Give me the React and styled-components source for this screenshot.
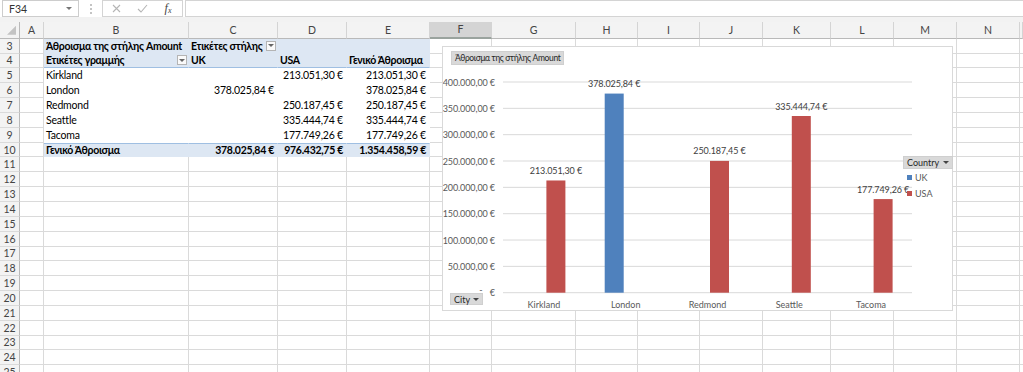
import React from 'react';
import styled, { createGlobalStyle } from 'styled-components';

const GlobalStyle = createGlobalStyle`
  html, body { margin: 0; padding: 0; background: #fff; }
  body { font-family: Lato, "Open Sans", "DejaVu Sans", sans-serif; color: #000; }
  #root { width: 1023px; height: 372px; overflow: hidden; }
`;

const COLS = [
  { key: 'A', w: 24 }, { key: 'B', w: 145 }, { key: 'C', w: 89 }, { key: 'D', w: 69 },
  { key: 'E', w: 83 }, { key: 'F', w: 62 }, { key: 'G', w: 84 }, { key: 'H', w: 62 },
  { key: 'I', w: 62 }, { key: 'J', w: 63 }, { key: 'K', w: 68 }, { key: 'L', w: 63 },
  { key: 'M', w: 63 }, { key: 'N', w: 63 },
];
const TEMPLATE = `20px ${COLS.map((c) => c.w + 'px').join(' ')} 1fr`;
const GRID = '#dadada';
const PIVOT_BLUE = '#dde7f3';
const PIVOT_LINE = '#9fbfe2';

const Page = styled.div`
  width: 1023px;
  height: 372px;
  display: flex;
  flex-direction: column;
  background: #fff;
  overflow: hidden;
  & > * { flex-shrink: 0; }
`;

/* ---------- formula bar ---------- */
const FormulaBar = styled.div`
  height: 17px;
  display: flex;
  align-items: stretch;
  background: #fff;
  padding-left: 2px;
  box-sizing: border-box;
`;
const NameBox = styled.div`
  width: 77px;
  box-sizing: border-box;
  border: 1px solid #cdcdcd;
  display: flex;
  align-items: center;
  justify-content: space-between;
  padding: 0 6px 0 6px;
  font-size: 10.5px;
  color: #333;
`;
const Caret = styled.span`
  width: 0;
  height: 0;
  border-left: 3px solid transparent;
  border-right: 3px solid transparent;
  border-top: 3px solid ${(p) => p.$color || '#777'};
`;
const Grip = styled.div`
  width: 23px;
  display: flex;
  flex-direction: column;
  align-items: center;
  justify-content: center;
  gap: 2px;
  & > span { width: 2px; height: 2px; background: #c4c4c4; }
`;
const IconBox = styled.div`
  width: 81px;
  box-sizing: border-box;
  border: 1px solid #d4d4d4;
  display: grid;
  grid-template-columns: 26px 26px 26px;
  align-items: center;
  justify-items: center;
`;
const Fx = styled.span`
  font-family: "Liberation Serif", serif;
  font-style: italic;
  font-size: 12px;
  color: #444;
  & > sub { font-size: 8px; vertical-align: -1px; }
`;
const FormulaInput = styled.div`
  flex: 1;
  margin-left: 2px;
  box-sizing: border-box;
  border: 1px solid #d4d4d4;
  border-right: none;
`;
const Band = styled.div`
  height: 5px;
  background: #f2f2f2;
`;

/* ---------- sheet ---------- */
const Sheet = styled.div`
  position: relative;
  height: 350px;
  overflow: hidden;
`;
const Row = styled.div`
  display: grid;
  grid-template-columns: ${TEMPLATE};
  height: ${(p) => p.$h}px;
`;
const ColHead = styled.div`
  box-sizing: border-box;
  display: flex;
  align-items: center;
  justify-content: center;
  font-size: 10.5px;
  color: #444;
  background: ${(p) => (p.$sel ? '#d4d4d4' : '#f3f3f3')};
  border-right: 1px solid #d4d4d4;
  border-bottom: ${(p) => (p.$sel ? '2px solid #9aa39e' : '1px solid #b9b9b9')};
`;
const Corner = styled.div`
  box-sizing: border-box;
  background: #f3f3f3;
  border-right: 1px solid #b9b9b9;
  border-bottom: 1px solid #b9b9b9;
  display: flex;
  align-items: flex-end;
  justify-content: flex-end;
  padding: 0 3px 3px 0;
  & > span {
    width: 9px;
    height: 9px;
    background: #c3c3c3;
    clip-path: polygon(100% 0, 100% 100%, 0 100%);
  }
`;
const RowHead = styled.div`
  box-sizing: border-box;
  display: flex;
  align-items: center;
  justify-content: center;
  font-size: 10.5px;
  color: #444;
  background: #f3f3f3;
  border-right: 1px solid #b9b9b9;
  border-bottom: 1px solid #dadada;
`;
const cellBg = { head: PIVOT_BLUE, total: PIVOT_BLUE, body: '#fff', plain: '#fff' };
const Cell = styled.div`
  box-sizing: border-box;
  display: flex;
  align-items: center;
  justify-content: ${(p) =>
    p.$filter ? 'space-between' : p.$align === 'right' ? 'flex-end' : 'flex-start'};
  padding: ${(p) =>
    p.$filter ? '0 1px 0 2px' : p.$align === 'right' ? '0 3px 0 2px' : '0 2px 0 2px'};
  font-size: 10.5px;
  font-weight: ${(p) => (p.$bold ? 700 : 400)};
  letter-spacing: ${(p) => (p.$bold ? '-0.3px' : '-0.2px')};
  white-space: nowrap;
  background: ${(p) => cellBg[p.$kind]};
  border-right: 1px solid ${(p) => (p.$kind === 'plain' ? GRID : 'transparent')};
  border-bottom: 1px solid
    ${(p) => (p.$kind === 'plain' ? GRID : p.$lineBelow ? PIVOT_LINE : 'transparent')};
  border-top: ${(p) => (p.$lineAbove ? `1px solid ${PIVOT_LINE}` : 'none')};
`;
const FilterBtn = styled.span`
  box-sizing: border-box;
  width: 10px;
  height: 10px;
  border: 1px solid #b4b4b4;
  background: #fafafa;
  display: flex;
  align-items: center;
  justify-content: center;
  flex-shrink: 0;
`;

/* ---------- chart ---------- */
const ChartBox = styled.div`
  position: absolute;
  left: 442px;
  top: 24px;
  width: 511px;
  height: 265px;
  box-sizing: border-box;
  border: 1px solid #d9d9d9;
  background: #fff;
`;
const FieldButton = styled.div`
  position: absolute;
  left: ${(p) => p.$x}px;
  top: ${(p) => p.$y}px;
  height: ${(p) => p.$h || 12}px;
  box-sizing: border-box;
  padding: 0 3px;
  display: flex;
  align-items: center;
  gap: 3px;
  background: #d9d9d9;
  border: 1px solid #cfcfcf;
  font-size: ${(p) => p.$fs || 9}px;
  color: #262626;
  white-space: nowrap;
  letter-spacing: ${(p) => p.$ls || 0}px;
`;
const Legend = styled.div`
  position: absolute;
  left: 460px;
  top: 109px;
  display: flex;
  flex-direction: column;
  align-items: flex-start;
`;
const LegendBtn = styled.div`
  height: 13px;
  box-sizing: border-box;
  padding: 0 3px;
  display: flex;
  align-items: center;
  gap: 4px;
  background: #d9d9d9;
  border: 1px solid #cfcfcf;
  font-size: 9px;
  color: #262626;
`;
const LegendItem = styled.div`
  height: 16px;
  display: flex;
  align-items: center;
  gap: 3px;
  padding-left: 4px;
  font-size: 9px;
  color: #595959;
`;
const Swatch = styled.span`
  width: 5px;
  height: 5px;
  background: ${(p) => p.$color};
`;
const PlotSvg = styled.svg`
  display: block;
  font-family: Lato, "Open Sans", sans-serif;
`;

const BLUE = '#4f81bd';
const RED = '#c0504d';

function fmt(v) {
  const [i, d] = v.toFixed(2).split('.');
  return i.replace(/\B(?=(\d{3})+(?!\d))/g, '.') + ',' + d + ' €';
}

const CITIES = [
  { name: 'Kirkland', uk: null, usa: 213051.3 },
  { name: 'London', uk: 378025.84, usa: null },
  { name: 'Redmond', uk: null, usa: 250187.45 },
  { name: 'Seattle', uk: null, usa: 335444.74 },
  { name: 'Tacoma', uk: null, usa: 177749.26 },
];

const Y0 = 245.7;
const yOf = (v) => Y0 - (v / 400000) * 210.7;
const X1 = 60;
const X2 = 469;
const CAT = (X2 - X1) / 5;

function Chart() {
  const ticks = [0, 50000, 100000, 150000, 200000, 250000, 300000, 350000, 400000];
  return (
    <ChartBox>
      <PlotSvg width="509" height="263" viewBox="0 0 509 263">
        {ticks.map((t) => (
          <g key={t}>
            <line x1={X1} x2={X2} y1={yOf(t)} y2={yOf(t)} stroke="#d9d9d9" strokeWidth="1" />
            {t === 0 ? (
              <>
                <text x="38" y={yOf(t) - 3} fontSize="9" fill="#595959" textAnchor="middle" dominantBaseline="central">-</text>
                <text x="52" y={yOf(t)} fontSize="9" fill="#595959" textAnchor="end" dominantBaseline="central">€</text>
              </>
            ) : (
              <text x="52" y={yOf(t)} fontSize="9" fill="#595959" textAnchor="end" dominantBaseline="central" letterSpacing="-0.1">
                {fmt(t)}
              </text>
            )}
          </g>
        ))}
        {CITIES.map((c, i) => {
          const cx = X1 + CAT * (i + 0.5);
          const bars = [];
          if (c.uk != null) bars.push({ v: c.uk, x: cx - 21, color: BLUE });
          if (c.usa != null) bars.push({ v: c.usa, x: cx + 2.5, color: RED });
          return (
            <g key={c.name}>
              {bars.map((b) => (
                <g key={b.color}>
                  <rect x={b.x} y={yOf(b.v)} width="19" height={Y0 - yOf(b.v)} fill={b.color} />
                  <text x={b.x + 9.5} y={yOf(b.v) - 10} fontSize="9" fill="#404040" textAnchor="middle" dominantBaseline="central" letterSpacing="-0.1">
                    {fmt(b.v)}
                  </text>
                </g>
              ))}
              <text x={cx} y="257" fontSize="9" fill="#595959" textAnchor="middle" dominantBaseline="central">
                {c.name}
              </text>
            </g>
          );
        })}
      </PlotSvg>
      <FieldButton $x={8} $y={4} $h={14} $fs={8.5} $ls={-0.35}>
        Άθροισμα της στήλης Amount
      </FieldButton>
      <FieldButton $x={7} $y={246}>
        City <Caret $color="#444" />
      </FieldButton>
      <Legend>
        <LegendBtn>
          Country <Caret $color="#444" />
        </LegendBtn>
        <LegendItem>
          <Swatch $color={BLUE} />
          UK
        </LegendItem>
        <LegendItem>
          <Swatch $color={RED} />
          USA
        </LegendItem>
      </Legend>
    </ChartBox>
  );
}

/* ---------- data ---------- */
const PIVOT = {
  3: {
    kind: 'head',
    cells: {
      B: { text: 'Άθροισμα της στήλης Amount', bold: true },
      C: { text: 'Ετικέτες στήλης', bold: true, filter: true },
      D: {},
      E: {},
    },
  },
  4: {
    kind: 'head',
    lineBelow: true,
    cells: {
      B: { text: 'Ετικέτες γραμμής', bold: true, filter: true },
      C: { text: 'UK', bold: true },
      D: { text: 'USA', bold: true },
      E: { text: 'Γενικό Άθροισμα', bold: true },
    },
  },
  10: {
    kind: 'total',
    cells: {
      B: { text: 'Γενικό Άθροισμα', bold: true },
      C: { text: fmt(378025.84), bold: true, align: 'right' },
      D: { text: fmt(976432.75), bold: true, align: 'right' },
      E: { text: fmt(1354458.59), bold: true, align: 'right' },
    },
  },
};
CITIES.forEach((c, i) => {
  PIVOT[5 + i] = {
    kind: 'body',
    cells: {
      B: { text: c.name },
      C: { text: c.uk != null ? fmt(c.uk) : '', align: 'right' },
      D: { text: c.usa != null ? fmt(c.usa) : '', align: 'right' },
      E: { text: fmt(c.uk != null ? c.uk : c.usa), align: 'right' },
    },
  };
});

const ROWS = Array.from({ length: 23 }, (_, i) => i + 3);

function FilterIcon() {
  return (
    <FilterBtn>
      <Caret $color="#666" />
    </FilterBtn>
  );
}

function SheetRow({ n }) {
  const p = PIVOT[n];
  return (
    <Row $h={14.85}>
      <RowHead>{n}</RowHead>
      {COLS.map((col) => {
        const pc = p && p.cells[col.key];
        if (pc) {
          return (
            <Cell
              key={col.key}
              $kind={p.kind}
              $bold={pc.bold}
              $align={pc.align}
              $filter={pc.filter}
              $lineBelow={p.lineBelow}
              $lineAbove={p.kind === 'total'}
            >
              {pc.text && <span>{pc.text}</span>}
              {pc.filter && <FilterIcon />}
            </Cell>
          );
        }
        return <Cell key={col.key} $kind="plain" />;
      })}
      <Cell $kind="plain" />
    </Row>
  );
}

export default function App() {
  return (
    <>
      <GlobalStyle />
      <Page>
        <FormulaBar>
          <NameBox>
            <span>F34</span>
            <Caret $color="#777" />
          </NameBox>
          <Grip>
            <span />
            <span />
            <span />
          </Grip>
          <IconBox>
            <svg width="9" height="9" viewBox="0 0 9 9">
              <path d="M1 1 L8 8 M8 1 L1 8" stroke="#b5b5b5" strokeWidth="1.1" />
            </svg>
            <svg width="11" height="9" viewBox="0 0 11 9">
              <path d="M1 5 L4 8 L10 1" stroke="#b5b5b5" strokeWidth="1.1" fill="none" />
            </svg>
            <Fx>
              f<sub>x</sub>
            </Fx>
          </IconBox>
          <FormulaInput />
        </FormulaBar>
        <Band />
        <Sheet>
          <Row $h={16.7}>
            <Corner>
              <span />
            </Corner>
            {COLS.map((c) => (
              <ColHead key={c.key} $sel={c.key === 'F'}>
                {c.key}
              </ColHead>
            ))}
            <ColHead />
          </Row>
          {ROWS.map((n) => (
            <SheetRow key={n} n={n} />
          ))}
          <Chart />
        </Sheet>
      </Page>
    </>
  );
}
